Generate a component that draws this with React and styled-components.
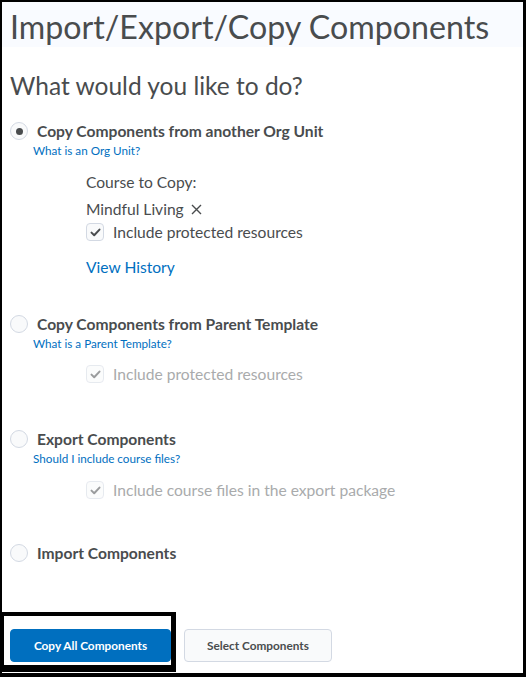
import styled, { createGlobalStyle } from "styled-components";

const GlobalStyle = createGlobalStyle`
  html, body {
    margin: 0;
    padding: 0;
    background: #000;
  }
  body {
    font-family: Lato, "Open Sans", sans-serif;
    color: #494c4e;
  }
`;

const Frame = styled.div`
  width: 526px;
  height: 677px;
  box-sizing: border-box;
  border-style: solid;
  border-color: #000;
  border-width: 2px 3px 4px 2px;
  background: #fff;
  overflow: hidden;
  position: relative;
`;

const Header = styled.div`
  background: #f9fbff;
  padding: 5px 0 0 8px;
`;

const Page = styled.div`
  padding: 0 0 0 8px;
`;

const Title = styled.h1`
  margin: 0;
  font-size: 32.2px;
  font-weight: 400;
  line-height: 40px;
  color: #494c4e;
`;

const Question = styled.h2`
  margin: 23px 0 19px;
  font-size: 24.5px;
  font-weight: 400;
  line-height: 32px;
`;

const Option = styled.div`
  margin-bottom: ${(p) => p.$gap}px;
`;

const RadioRow = styled.label`
  display: flex;
  align-items: center;
  gap: 9px;
  font-size: 15.6px;
  font-weight: 700;
  line-height: 20px;
`;

const Radio = styled.span`
  width: 18px;
  height: 18px;
  box-sizing: border-box;
  border-radius: 50%;
  border: 1px solid #d3d9e3;
  background: #f9fafb;
  display: flex;
  align-items: center;
  justify-content: center;
  &::after {
    content: "";
    width: 7px;
    height: 7px;
    border-radius: 50%;
    background: #494c4e;
    display: ${(p) => (p.$checked ? "block" : "none")};
  }
`;

const HelpLink = styled.a`
  display: block;
  margin: 2px 0 0 23px;
  font-size: 11.7px;
  line-height: 14px;
  color: #006fbf;
  text-decoration: none;
`;

const Nested = styled.div`
  padding-left: 76px;
  margin-top: ${(p) => p.$top}px;
  display: flex;
  flex-direction: column;
  font-size: 15.6px;
  line-height: 20px;
`;

const Line = styled.div`
  margin-bottom: ${(p) => p.$after}px;
`;

const CourseName = styled.div`
  display: flex;
  align-items: center;
  gap: 7px;
  margin-bottom: 3px;
`;

const CheckRow = styled.label`
  display: flex;
  align-items: center;
  gap: 9px;
  color: ${(p) => (p.$disabled ? "#a9abac" : "#494c4e")};
`;

const Box = styled.span`
  width: 18px;
  height: 18px;
  box-sizing: border-box;
  border-radius: 4px;
  border: 1px solid #d3d9e3;
  background: #f9fafb;
  display: flex;
  align-items: center;
  justify-content: center;
  opacity: ${(p) => (p.$disabled ? 0.55 : 1)};
`;

const HistoryLink = styled.a`
  margin-top: 15px;
  font-size: 15.6px;
  color: #006fbf;
  text-decoration: none;
`;

const Actions = styled.div`
  position: absolute;
  left: 8px;
  top: 627px;
  display: flex;
  gap: 13px;
`;

const Button = styled.button`
  height: 33px;
  padding: 0;
  width: ${(p) => p.$w}px;
  border-radius: 4px;
  font-family: Lato, sans-serif;
  font-size: 11.8px;
  font-weight: 700;
  border: 1px solid ${(p) => (p.$primary ? "#006fbf" : "#d3d9e3")};
  background: ${(p) => (p.$primary ? "#006fbf" : "#f9fafb")};
  color: ${(p) => (p.$primary ? "#fff" : "#494c4e")};
`;

const Highlight = styled.div`
  position: absolute;
  left: -2px;
  top: 610px;
  width: 176px;
  height: 60px;
  box-sizing: border-box;
  border: 4px solid #000;
  border-right-width: 5px;
  border-bottom-width: 7px;
  pointer-events: none;
`;

const Check = () => (
  <svg width="11" height="9" viewBox="0 0 11 9">
    <path d="M1.5 4.6 L4.2 7.2 L9.5 1.6" fill="none" stroke="#494c4e" strokeWidth="2" strokeLinecap="round" strokeLinejoin="round" />
  </svg>
);

const Cross = () => (
  <svg width="11" height="11" viewBox="0 0 11 11">
    <path d="M1 1 L10 10 M10 1 L1 10" stroke="#494c4e" strokeWidth="1.4" />
  </svg>
);

export default function App() {
  return (
    <>
      <GlobalStyle />
      <Frame>
        <Header>
          <Title>Import/Export/Copy Components</Title>
        </Header>
        <Page>
          <Question>What would you like to do?</Question>

          <Option $gap={37}>
            <RadioRow>
              <Radio $checked />
              Copy Components from another Org Unit
            </RadioRow>
            <HelpLink>What is an Org Unit?</HelpLink>
            <Nested $top={15}>
              <Line $after={7}>Course to Copy:</Line>
              <CourseName>
                Mindful Living <Cross />
              </CourseName>
              <CheckRow>
                <Box>
                  <Check />
                </Box>
                Include protected resources
              </CheckRow>
              <HistoryLink>View History</HistoryLink>
            </Nested>
          </Option>

          <Option $gap={45}>
            <RadioRow>
              <Radio />
              Copy Components from Parent Template
            </RadioRow>
            <HelpLink>What is a Parent Template?</HelpLink>
            <Nested $top={14}>
              <CheckRow $disabled>
                <Box $disabled>
                  <Check />
                </Box>
                Include protected resources
              </CheckRow>
            </Nested>
          </Option>

          <Option $gap={43}>
            <RadioRow>
              <Radio />
              Export Components
            </RadioRow>
            <HelpLink>Should I include course files?</HelpLink>
            <Nested $top={15}>
              <CheckRow $disabled>
                <Box $disabled>
                  <Check />
                </Box>
                Include course files in the export package
              </CheckRow>
            </Nested>
          </Option>

          <Option $gap={0}>
            <RadioRow>
              <Radio />
              Import Components
            </RadioRow>
          </Option>
        </Page>
        <Actions>
          <Button $primary $w={161}>Copy All Components</Button>
          <Button $w={148}>Select Components</Button>
        </Actions>
        <Highlight />
      </Frame>
    </>
  );
}
